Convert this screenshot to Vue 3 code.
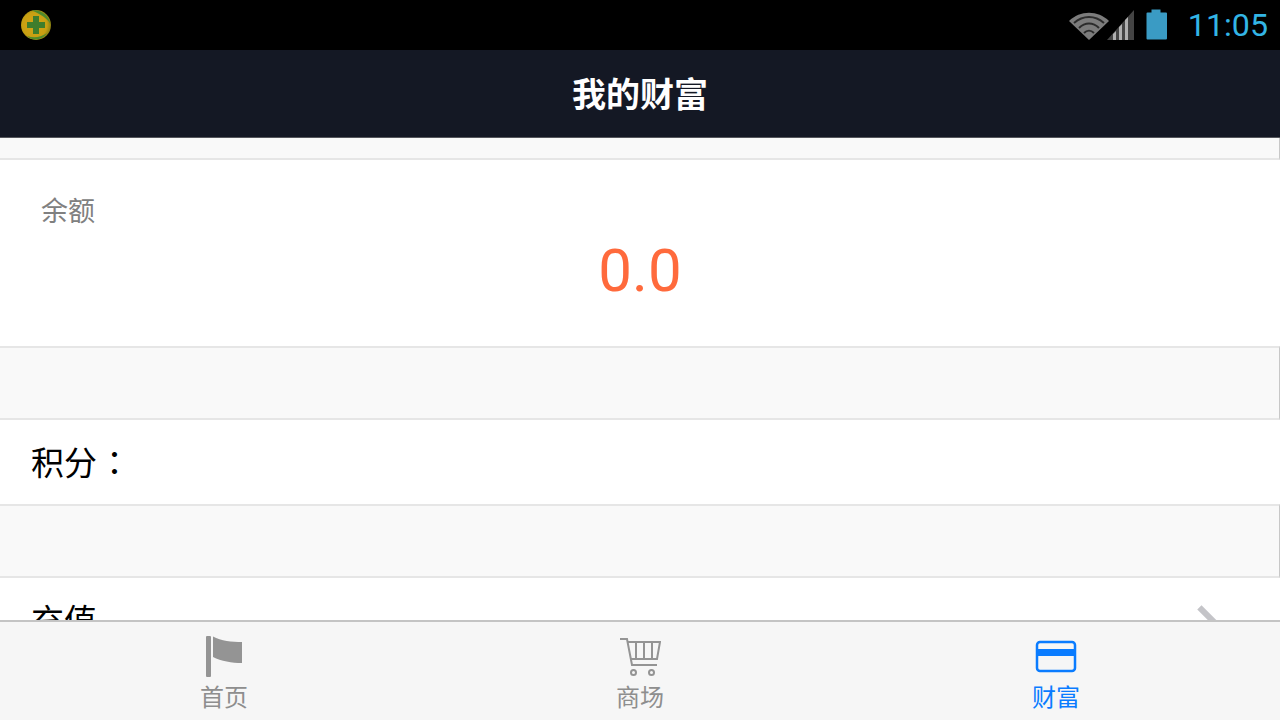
<template>
  <div class="screen">
    <div class="status">
      <svg class="logo" width="32" height="32" viewBox="0 0 32 32">
        <defs>
          <radialGradient id="g" cx="0.45" cy="0.5" r="0.55">
            <stop offset="0" stop-color="#d8a416" />
            <stop offset="0.75" stop-color="#c8a012" />
            <stop offset="1" stop-color="#8a8012" />
          </radialGradient>
        </defs>
        <circle cx="16" cy="16" r="15" fill="url(#g)" />
        <path d="M12 1.500C20 0 29 6 30.500 15 27 9 20 5 12 1.500ZM7 27C13 29 20 29 27 24 22 32 12 32 7 27Z" fill="#4f8a2c" />
        <path d="M13 7h6v6h6v6h-6v6h-6v-6H7v-6h6z" fill="#3f7d2c" />
      </svg>
      <div class="status-right">
        <svg class="soft" width="42" height="32" viewBox="0 0 42 32">
          <path d="M1 12C12 1 30 1 41 12L21 31Z" fill="#7c7c7c" />
          <path d="M6 14C15 6 27 6 36 14M11 19C17 13 25 13 31 19M16 24C19 21 23 21 26 24" fill="none" stroke="#2c2c2c" stroke-width="2" />
        </svg>
        <svg class="soft signal" width="28" height="32" viewBox="0 0 28 32">
          <path d="M0 31L27 1V31Z" fill="#444" />
          <path d="M6 31V25L9 22V31ZM12 31V18L15 15V31ZM18 31V11L21 8V31Z" fill="#b0b0b0" />
        </svg>
        <svg class="soft battery" width="22" height="32" viewBox="0 0 22 32">
          <path d="M5.500 0.500h9v3h5.500a1 1 0 0 1 1 1v25a1 1 0 0 1-1 1H1.500a1 1 0 0 1-1-1v-25a1 1 0 0 1 1-1h4z" fill="#3a9bc4" />
        </svg>
        <span class="time">11:05</span>
      </div>
    </div>
    <header class="title">我的财富</header>
    <main class="content">
      <div class="gap gap-top"></div>
      <section class="balance">
        <div class="balance-label">余额</div>
        <div class="balance-value">0.0</div>
      </section>
      <div class="gap"></div>
      <div class="row points">积分<span class="colon">：</span></div>
      <div class="gap"></div>
      <div class="row recharge">
        <span>充值</span>
        <span class="chevron"></span>
      </div>
    </main>
    <nav class="tabs">
      <div class="tab">
        <svg width="40" height="42" viewBox="0 0 40 42">
          <rect x="2" y="1" width="5" height="41" rx="1" fill="#949494" />
          <path d="M9 1.500C17 6 28 7 38 7V28C28 28 17 26 9 22Z" fill="#949494" />
        </svg>
        <span>首页</span>
      </div>
      <div class="tab">
        <svg width="42" height="42" viewBox="0 0 42 42" fill="none" stroke="#949494" stroke-width="2">
          <path d="M1 4H8L13 30H38M9 7H41L38 24H12M17 7V24M25 7V24M33 7V24" />
          <circle cx="14.500" cy="37.500" r="2.500" />
          <circle cx="32.500" cy="37.500" r="2.500" />
        </svg>
        <span>商场</span>
      </div>
      <div class="tab active">
        <svg width="42" height="42" viewBox="0 0 42 42" fill="none">
          <rect x="2" y="7" width="38" height="29" rx="3" stroke="#0a7cff" stroke-width="2.500" />
          <rect x="2" y="14" width="38" height="7" fill="#0a7cff" />
        </svg>
        <span>财富</span>
      </div>
    </nav>
  </div>
</template>

<script setup>
</script>

<style>
html, body { margin: 0; background: #fff; }
</style>

<style scoped>
.screen {
  width: 1280px;
  height: 720px;
  display: flex;
  flex-direction: column;
  overflow: hidden;
  font-family: "Roboto", "Noto Sans CJK SC", sans-serif;
  background: #fff;
}
.status {
  flex: 0 0 50px;
  background: #000;
  display: flex;
  align-items: center;
  justify-content: space-between;
  padding: 0 12px 0 20px;
}
.logo { filter: blur(0.5px); }
.status-right { display: flex; align-items: center; }
.soft { filter: blur(0.6px); }
.signal { margin-left: -3px; }
.battery { margin-left: 11px; }
.time {
  font-size: 32.2px;
  color: #33b5e5;
  margin-left: 20px;
  font-weight: 400;
}
.title {
  flex: 0 0 88px;
  box-sizing: border-box;
  background: #141824;
  color: #fff;
  font-size: 34px;
  font-weight: 700;
  display: flex;
  align-items: center;
  justify-content: center;
  padding-bottom: 2px;
  border-bottom: 1px solid #55565c;
}
.content { flex: 1; min-height: 0; overflow: hidden; }
.gap {
  height: 74px;
  box-sizing: border-box;
  background: #f9f9f9;
  border-top: 2px solid #e6e6e6;
  border-bottom: 2px solid #e6e6e6;
  border-right: 1px solid #c8c8c8;
}
.gap-top {
  height: 22px;
  border-top: 0;
}
.balance {
  height: 186px;
  padding: 33px 0 0 41px;
  box-sizing: border-box;
}
.balance-label { font-size: 27px; line-height: 38px; color: #808080; }
.balance-value {
  margin-left: -41px;
  margin-top: 5px;
  text-align: center;
  font-size: 60px;
  line-height: 70px;
  color: #ff6a3c;
}
.row {
  height: 84px;
  padding: 0 31px 0 31px;
  display: flex;
  align-items: center;
  font-size: 33px;
  color: #000;
  box-sizing: border-box;
}
.points { padding-bottom: 3px; }
.colon { font-family: "Noto Sans CJK TC", sans-serif; margin-left: 1px; }
.recharge {
  justify-content: space-between;
  align-items: flex-start;
  padding-top: 17px;
}
.chevron {
  width: 30px;
  height: 6px;
  background: #c4c4c8;
  transform: rotate(45deg);
  margin: 20px 24px 0 0;
}
.tabs {
  flex: 0 0 100px;
  box-sizing: border-box;
  display: flex;
  padding: 0 16px;
  background: #f6f6f6;
  border-top: 2px solid #c4c4c4;
}
.tab {
  flex: 1;
  display: flex;
  flex-direction: column;
  align-items: center;
  padding-top: 13px;
  color: #8e8e8e;
  font-size: 24px;
}
.tab span { line-height: 32px; margin-top: 5px; }
.tab.active { color: #0a7cff; }
</style>
